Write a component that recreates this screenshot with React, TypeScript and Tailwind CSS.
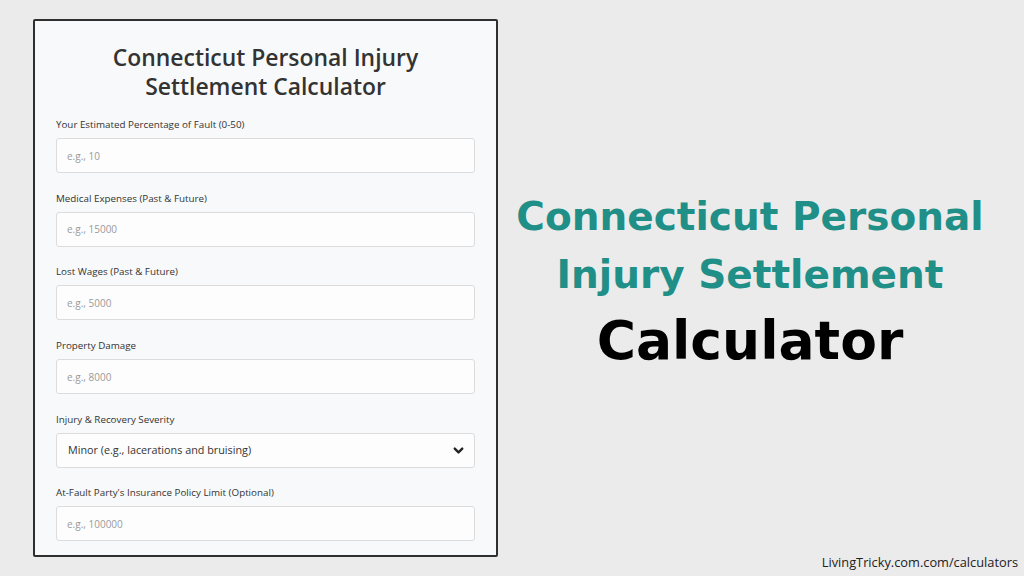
import { ChevronDown } from "lucide-react";

const fields = [
  { label: "Your Estimated Percentage of Fault (0-50)", placeholder: "e.g., 10" },
  { label: "Medical Expenses (Past & Future)", placeholder: "e.g., 15000" },
  { label: "Lost Wages (Past & Future)", placeholder: "e.g., 5000" },
  { label: "Property Damage", placeholder: "e.g., 8000" },
];

function Field({ label, children }: { label: string; children: React.ReactNode }) {
  return (
    <div className="flex flex-col">
      <label className="mb-[6px] text-[9.8px] leading-[14px] text-[#333]">{label}</label>
      {children}
    </div>
  );
}

function TextInput({ placeholder }: { placeholder: string }) {
  return (
    <input
      type="text"
      placeholder={placeholder}
      className="h-[35px] w-full rounded-[3px] border border-[#dcdcdc] bg-[#fdfdfd] px-[10px] text-[10px] text-[#333] outline-none placeholder:text-[#9a9a9a]"
    />
  );
}

export default function App() {
  return (
    <div
      className="flex h-[576px] w-[1024px] bg-[#ebebeb]"
      style={{ fontFamily: "'Open Sans', 'Liberation Sans', sans-serif" }}
    >
      <div className="ml-[33px] mt-[19px] flex h-[538px] w-[465px] flex-col rounded-[2px] border-2 border-[#2f2f2f] bg-[#f8f9fa] px-[21px] pt-[22px]">
        <h1 className="text-center text-[22.9px] font-semibold leading-[29px] text-[#333]">
          Connecticut Personal Injury
          <br />
          Settlement Calculator
        </h1>
        <div className="mt-[17px] flex flex-col gap-[18.7px]">
          {fields.map((f) => (
            <Field key={f.label} label={f.label}>
              <TextInput placeholder={f.placeholder} />
            </Field>
          ))}
          <Field label="Injury & Recovery Severity">
            <div className="flex h-[35px] w-full items-center justify-between rounded-[3px] border border-[#dcdcdc] bg-[#fdfdfd] pl-[11px] pr-[8px] text-[10.8px] text-[#333]">
              <span>Minor (e.g., lacerations and bruising)</span>
              <ChevronDown size={15} strokeWidth={3.8} color="#222" />
            </div>
          </Field>
          <Field label="At-Fault Party's Insurance Policy Limit (Optional)">
            <TextInput placeholder="e.g., 100000" />
          </Field>
        </div>
      </div>

      <div className="relative flex flex-1 flex-col">
        <div className="mt-[188px] flex flex-col items-center pr-[22px]">
          <div
            className="text-center text-[39px] font-bold leading-[58px] text-[#1f8f87]"
            style={{ fontFamily: "'DejaVu Sans', sans-serif" }}
          >
            Connecticut Personal
            <br />
            Injury Settlement
          </div>
          <div
            className="mt-[6px] text-[53.5px] font-bold leading-[62px] text-black"
            style={{ fontFamily: "'DejaVu Sans', sans-serif" }}
          >
            Calculator
          </div>
        </div>
        <div className="mt-auto mb-[4px] pr-[6px] text-right text-[12.8px] text-[#222]">
          LivingTricky.com.com/calculators
        </div>
      </div>
    </div>
  );
}
